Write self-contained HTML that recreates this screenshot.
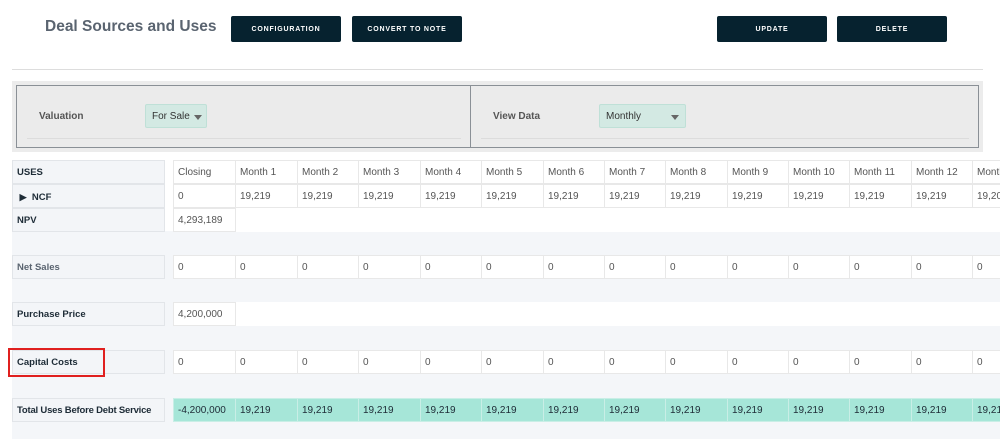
<!DOCTYPE html>
<html><head><meta charset="utf-8"><style>
*{box-sizing:border-box;margin:0;padding:0}
body{width:1000px;height:439px;overflow:hidden;background:#fff;font-family:"Liberation Sans",Arial,sans-serif;position:relative}
.abs{position:absolute}
h1{position:absolute;left:45px;top:18px;font-size:15.5px;color:#5a6470;font-weight:bold;white-space:nowrap}
.btn{position:absolute;height:26px;background:#06222f;color:#fff;font-size:7px;font-weight:bold;letter-spacing:.8px;text-align:center;line-height:28px;border-radius:2px}
.lbl{position:absolute;left:12px;width:153px;height:24px;background:#f3f5f8;border:1px solid #e2e5e9;font-size:9.5px;font-weight:bold;color:#1d2b36;padding-left:4px;line-height:24px;white-space:nowrap;overflow:hidden}
.cell{position:absolute;height:24px;background:#fff;border:1px solid #e8e8e8;font-size:10px;color:#555;padding-left:4px;line-height:24px;white-space:nowrap;overflow:hidden}
.teal{background:#a6e6d8;border-color:#c9eee6;color:#1d2b36}
.dd{position:absolute;height:24px;background:#d3e9e3;border:1px solid #bfe0d7;font-size:10px;color:#333;line-height:24px;padding-left:6px;border-radius:2px}
.tri{position:absolute;top:10px;width:0;height:0;border-left:4px solid transparent;border-right:4px solid transparent;border-top:5px solid #666}
</style></head><body>
<h1>Deal Sources and Uses</h1>
<div class="btn" style="left:231px;top:16px;width:110px">CONFIGURATION</div>
<div class="btn" style="left:352px;top:16px;width:110px">CONVERT TO NOTE</div>
<div class="btn" style="left:717px;top:16px;width:110px">UPDATE</div>
<div class="btn" style="left:837px;top:16px;width:110px">DELETE</div>
<div class="abs" style="left:12px;top:69px;width:971px;height:1px;background:#ddd"></div>
<div class="abs" style="left:12px;top:81px;width:971px;height:71px;background:#ececec"></div>
<div class="abs" style="left:16px;top:85px;width:963px;height:63px;border:1px solid #8a9096;background:#ebebeb"></div>
<div class="abs" style="left:470px;top:85px;width:1px;height:63px;background:#8a9096"></div>
<div class="abs" style="left:27px;top:138px;width:434px;height:1px;background:#dcdcdc"></div>
<div class="abs" style="left:481px;top:138px;width:488px;height:1px;background:#dcdcdc"></div>
<div class="abs" style="left:39px;top:111px;font-size:10px;font-weight:bold;color:#555">Valuation</div>
<div class="abs" style="left:493px;top:111px;font-size:10px;font-weight:bold;color:#555">View Data</div>
<div class="dd" style="left:145px;top:104px;width:62px">For Sale<span class="tri" style="left:48px"></span></div>
<div class="dd" style="left:599px;top:104px;width:87px">Monthly<span class="tri" style="left:71px"></span></div>
<div class="abs" style="left:12px;top:231px;width:988px;height:208px;background:#f4f6f9"></div>
<div id="t"></div>
<div class="abs" style="left:8px;top:348px;width:97px;height:29px;border:2px solid #e0201f"></div>
<script>
var cols=[173,235,297,358,420,481,543,604,665,727,788,849,911,972,1034];
var t=document.getElementById('t'),h='';
function lbl(y,s,c){h+='<div class="lbl" style="top:'+y+'px;'+(c||'')+'">'+s+'</div>';}
function row(y,vals,cls){for(var i=0;i<vals.length;i++){h+='<div class="cell '+(cls||'')+'" style="top:'+y+'px;left:'+cols[i]+'px;width:'+(cols[i+1]-cols[i]+1)+'px">'+vals[i]+'</div>';}}
var m=['Closing'];for(var i=1;i<=13;i++)m.push('Month '+i);
var n=['0'];for(i=1;i<13;i++)n.push('19,219');n.push('19,207');
var z=[];for(i=0;i<14;i++)z.push('0');
var tt=['-4,200,000'];for(i=1;i<14;i++)tt.push('19,219');
lbl(160,'USES');row(160,m);
lbl(184,'&nbsp;<span style="font-size:9px">&#9654;</span>&nbsp; NCF');row(184,n);
lbl(208,'NPV');
h+='<div class="abs" style="left:235px;top:208px;width:765px;height:24px;background:#fff"></div>';
row(208,['4,293,189']);
lbl(255,'Net Sales','color:#5a6470');row(255,z);
lbl(302,'Purchase Price');
h+='<div class="abs" style="left:235px;top:302px;width:765px;height:24px;background:#fff"></div>';
row(302,['4,200,000']);
lbl(350,'Capital Costs');row(350,z);
lbl(398,'Total Uses Before Debt Service','letter-spacing:-0.2px');row(398,tt,'teal');
t.innerHTML=h;
</script>
</body></html>
